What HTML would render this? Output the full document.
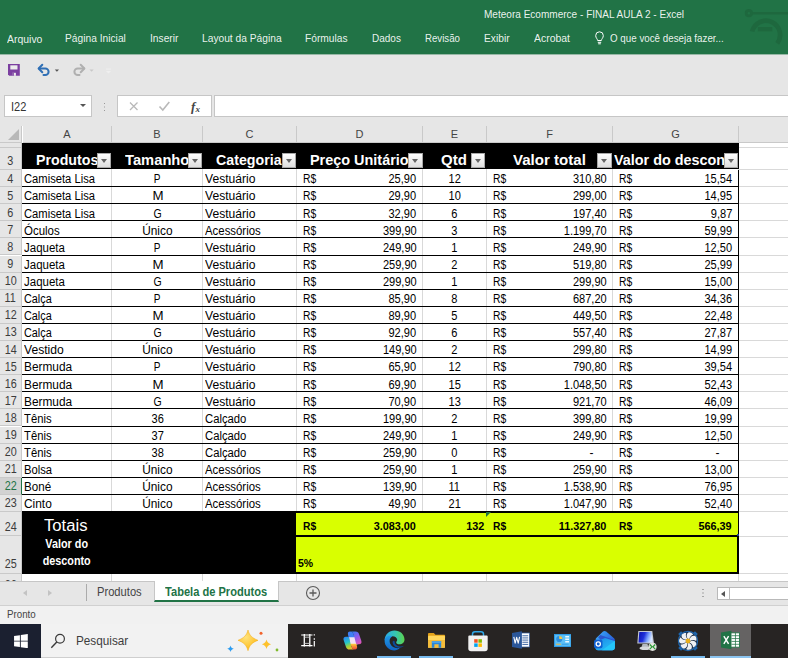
<!DOCTYPE html>
<html><head><meta charset="utf-8"><title>Excel</title>
<style>
*{box-sizing:border-box;margin:0;padding:0}
html,body{width:788px;height:658px;overflow:hidden;background:#e6e6e6}
body{position:relative;font-family:"Liberation Sans",sans-serif;font-size:12px;color:#000}
.abs{position:absolute}
.t{position:absolute;white-space:nowrap;line-height:1}
.t>span{display:inline-block;transform-origin:left center}
.t.r>span{transform-origin:right center}
.t.c>span{transform-origin:center center}
.t.r{text-align:right}
.t.c{text-align:center}
#title{left:0;top:0;width:788px;height:54px;background:#217346}
.mt{color:rgba(255,255,255,.92);font-size:11px;top:33px}
.mt>span{transform:scaleX(.93)}
#sheet{left:0;top:126px;width:788px;height:455px;background:#fff;overflow:hidden}
.ch{position:absolute;top:0;height:17px;background:#e6e6e6;border-right:1px solid #c9c9c9;border-bottom:1px solid #c9c9c9;color:#444;font-size:11px;text-align:center;line-height:17px}
.rhd{position:absolute;left:0;width:22px;background:#e6e6e6;border-bottom:1px solid #c9c9c9;border-right:1px solid #c9c9c9;color:#3c3c3c;font-size:12px;text-align:center}
.rhd>span{display:inline-block;transform:scaleX(.9)}
.vg{position:absolute;width:1px;background:#d9d9d9}
.hg{position:absolute;height:1px;background:#d9d9d9}
.hl{position:absolute;height:1px;background:#000}
.cell{font-size:12px;color:#000}
.cell>span{transform:scaleX(.945)}
.hd{color:#fff;font-weight:bold;font-size:15px}
.hd>span{transform:scaleX(.93)}
.fb{position:absolute;width:14.5px;height:14.5px;background:linear-gradient(#ffffff,#dedede);border:1px solid #a8a8a8}
.fb:after{content:"";position:absolute;left:3px;top:5px;border-left:3.5px solid transparent;border-right:3.5px solid transparent;border-top:4px solid #666}
.tot{font-weight:bold;font-size:11px}
.tot>span{transform:scaleX(.985)}
#tabs{left:0;top:581px;width:788px;height:24px;background:#e6e6e6;border-top:1px solid #c6c6c6}
#status{left:0;top:605px;width:788px;height:19px;background:#f1f1f1;border-top:1px solid #d0d0d0}
#task{left:0;top:624px;width:788px;height:34px;background:#272423}
</style></head><body>

<div id="title" class="abs"></div>
<div class="abs" style="left:0;top:54px;width:788px;height:1px;background:#97b8a6"></div>
<svg class="abs" style="left:736px;top:0" width="52" height="54" viewBox="0 0 52 54">
<g fill="none" stroke="#1e683e">
<circle cx="12.850" cy="13.200" r="2.700" stroke-width="2.800"/><path d="M16.700 13.200H52" stroke-width="2.500"/>
<path d="M16.120 31.460A14.200 14.200 0 1 1 41.240 43.450" stroke-width="4.700"/>
</g><rect x="21.800" y="27.100" width="14.500" height="4.200" fill="#1e683e"/></svg>
<div class="t mt" style="left:484px;top:9px"><span style="transform:scaleX(.913)">Meteora Ecommerce - FINAL AULA 2 - Excel</span></div>
<div class="t mt" style="left:7px;top:33.600px"><span style="transform:scaleX(0.95)">Arquivo</span></div>
<div class="t mt" style="left:65px"><span style="transform:scaleX(0.93)">Página Inicial</span></div>
<div class="t mt" style="left:150px"><span style="transform:scaleX(0.93)">Inserir</span></div>
<div class="t mt" style="left:202px"><span style="transform:scaleX(0.93)">Layout da Página</span></div>
<div class="t mt" style="left:305px"><span style="transform:scaleX(0.93)">Fórmulas</span></div>
<div class="t mt" style="left:372px"><span style="transform:scaleX(0.91)">Dados</span></div>
<div class="t mt" style="left:425px"><span style="transform:scaleX(0.88)">Revisão</span></div>
<div class="t mt" style="left:484px"><span style="transform:scaleX(0.93)">Exibir</span></div>
<div class="t mt" style="left:534px"><span style="transform:scaleX(0.95)">Acrobat</span></div>
<div class="t mt" style="left:610px"><span style="transform:scaleX(0.89)">O que você deseja fazer...</span></div>
<svg class="abs" style="left:594px;top:31px" width="11" height="14" viewBox="0 0 11 14"><g fill="none" stroke="#fff" stroke-width="1"><path d="M3.6 9.5C3.6 8 1.7 7 1.7 4.6a3.8 3.8 0 0 1 7.6 0C9.3 7 7.4 8 7.4 9.5z"/><path d="M3.8 11.3h3.4M4.2 12.8h2.6"/></g></svg>
<svg class="abs" style="left:6px;top:62px" width="110" height="16" viewBox="0 0 110 16">
<path d="M2 2h11.800v11.800H3.200L2 12.600z" fill="#7b3fa0"/><rect x="4.300" y="3.300" width="7.200" height="4.200" fill="#ececec"/><rect x="6.300" y="10.800" width="3.600" height="3" fill="#ececec"/><rect x="6.300" y="10.800" width="1.500" height="3" fill="#7b3fa0"/>
<g fill="none" stroke="#2f6fb5" stroke-width="2" stroke-linecap="round" stroke-linejoin="round"><path d="M33 6.500h6.300a3.300 3.300 0 0 1 0 6.600h-1.800"/><path d="M36.300 2.800l-3.700 3.700 3.700 3.700"/></g>
<path d="M48.800 7.500h4.200l-2.100 2.300z" fill="#555"/>
<g fill="none" stroke="#b0b0b0" stroke-width="2" stroke-linecap="round" stroke-linejoin="round"><path d="M78 6.500h-6.300a3.300 3.300 0 0 0 0 6.600h1.800"/><path d="M74.700 2.800l3.700 3.700-3.700 3.700"/></g>
<path d="M83.500 7.500h4.200l-2.100 2.300z" fill="#c8c8c8"/>
<path d="M100 9h5l-2.500 2.500z" fill="#efefef"/><path d="M100 7h5" stroke="#efefef"/>
</svg>
<div class="abs" style="left:4px;top:95px;width:88px;height:22px;background:#fff;border:1px solid #c6c6c6"></div>
<div class="t" style="left:10.500px;top:100.500px;font-size:12px;color:#333"><span style="transform:scaleX(.92)">I22</span></div>
<div class="abs" style="left:79.500px;top:104px;border-left:3px solid transparent;border-right:3px solid transparent;border-top:3.500px solid #555"></div>
<div class="abs" style="left:104px;top:102.500px;width:1px;height:1px;background:#999;box-shadow:0 3.500px 0 #999,0 7px 0 #999"></div>
<div class="abs" style="left:117px;top:95px;width:95px;height:22px;background:#fff;border:1px solid #c6c6c6"></div>
<svg class="abs" style="left:117px;top:95px" width="95" height="22" viewBox="0 0 95 22">
<path d="M13 7.500l7.500 7.500M20.500 7.500l-7.500 7.500" stroke="#b9b9b9" stroke-width="1.300" fill="none"/>
<path d="M42.500 11.500l3.300 3.500 6.500-8" stroke="#b9b9b9" stroke-width="1.600" fill="none"/>
<text x="74" y="16" font-family="Liberation Serif" font-style="italic" font-weight="bold" font-size="13" fill="#444">f</text>
<text x="78.500" y="16.500" font-family="Liberation Serif" font-style="italic" font-weight="bold" font-size="9" fill="#444">x</text>
</svg>
<div class="abs" style="left:214px;top:95px;width:580px;height:22px;background:#fff;border:1px solid #c6c6c6"></div>
<div id="sheet" class="abs">
<div class="vg" style="left:111px;top:0;height:456px"></div>
<div class="vg" style="left:202px;top:0;height:456px"></div>
<div class="vg" style="left:296px;top:0;height:456px"></div>
<div class="vg" style="left:422px;top:0;height:456px"></div>
<div class="vg" style="left:486px;top:0;height:456px"></div>
<div class="vg" style="left:612px;top:0;height:456px"></div>
<div class="vg" style="left:738px;top:0;height:456px"></div>
<div class="hg" style="left:738px;width:50px;top:43.00px"></div>
<div class="hg" style="left:738px;width:50px;top:60.10px"></div>
<div class="hg" style="left:738px;width:50px;top:77.20px"></div>
<div class="hg" style="left:738px;width:50px;top:94.30px"></div>
<div class="hg" style="left:738px;width:50px;top:111.40px"></div>
<div class="hg" style="left:738px;width:50px;top:128.50px"></div>
<div class="hg" style="left:738px;width:50px;top:145.60px"></div>
<div class="hg" style="left:738px;width:50px;top:162.70px"></div>
<div class="hg" style="left:738px;width:50px;top:179.80px"></div>
<div class="hg" style="left:738px;width:50px;top:196.90px"></div>
<div class="hg" style="left:738px;width:50px;top:214.00px"></div>
<div class="hg" style="left:738px;width:50px;top:231.10px"></div>
<div class="hg" style="left:738px;width:50px;top:248.20px"></div>
<div class="hg" style="left:738px;width:50px;top:265.30px"></div>
<div class="hg" style="left:738px;width:50px;top:282.40px"></div>
<div class="hg" style="left:738px;width:50px;top:299.50px"></div>
<div class="hg" style="left:738px;width:50px;top:316.60px"></div>
<div class="hg" style="left:738px;width:50px;top:333.70px"></div>
<div class="hg" style="left:738px;width:50px;top:350.80px"></div>
<div class="hg" style="left:738px;width:50px;top:367.90px"></div>
<div class="hg" style="left:738px;width:50px;top:385.00px"></div>
<div class="hg" style="left:738px;width:50px;top:410.00px"></div>
<div class="hg" style="left:738px;width:50px;top:447.00px"></div>
<div class="hg" style="left:738px;width:50px;top:21px"></div>
<div class="ch" style="left:0;width:22px"></div>
<div class="abs" style="left:8px;top:3px;border-left:11px solid transparent;border-bottom:11px solid #b8b8b8"></div>
<div class="ch" style="left:23px;width:89px">A</div>
<div class="ch" style="left:112px;width:91px">B</div>
<div class="ch" style="left:203px;width:94px">C</div>
<div class="ch" style="left:297px;width:126px">D</div>
<div class="ch" style="left:423px;width:64px">E</div>
<div class="ch" style="left:487px;width:126px">F</div>
<div class="ch" style="left:613px;width:126px">G</div>
<div class="ch" style="left:739px;width:50px;border-right:0"></div>
<div class="abs" style="left:22px;top:17px;width:717px;height:26.00px;background:#000"></div>
<div class="rhd" style="top:17px;height:5px"></div>
<div class="rhd" style="top:22px;height:22.00px"><div class="t c" style="left:0;width:21px;top:7.00px"><span style="transform:scaleX(.9)">3</span></div></div>
<div class="rhd" style="top:44.00px;height:17.10px;"><div class="t c" style="left:0;width:21px;top:2.5px"><span style="transform:scaleX(.9)">4</span></div></div>
<div class="rhd" style="top:61.10px;height:17.10px;"><div class="t c" style="left:0;width:21px;top:2.5px"><span style="transform:scaleX(.9)">5</span></div></div>
<div class="rhd" style="top:78.20px;height:17.10px;"><div class="t c" style="left:0;width:21px;top:2.5px"><span style="transform:scaleX(.9)">6</span></div></div>
<div class="rhd" style="top:95.30px;height:17.10px;"><div class="t c" style="left:0;width:21px;top:2.5px"><span style="transform:scaleX(.9)">7</span></div></div>
<div class="rhd" style="top:112.40px;height:17.10px;"><div class="t c" style="left:0;width:21px;top:2.5px"><span style="transform:scaleX(.9)">8</span></div></div>
<div class="rhd" style="top:129.50px;height:17.10px;"><div class="t c" style="left:0;width:21px;top:2.5px"><span style="transform:scaleX(.9)">9</span></div></div>
<div class="rhd" style="top:146.60px;height:17.10px;"><div class="t c" style="left:0;width:21px;top:2.5px"><span style="transform:scaleX(.9)">10</span></div></div>
<div class="rhd" style="top:163.70px;height:17.10px;"><div class="t c" style="left:0;width:21px;top:2.5px"><span style="transform:scaleX(.9)">11</span></div></div>
<div class="rhd" style="top:180.80px;height:17.10px;"><div class="t c" style="left:0;width:21px;top:2.5px"><span style="transform:scaleX(.9)">12</span></div></div>
<div class="rhd" style="top:197.90px;height:17.10px;"><div class="t c" style="left:0;width:21px;top:2.5px"><span style="transform:scaleX(.9)">13</span></div></div>
<div class="rhd" style="top:215.00px;height:17.10px;"><div class="t c" style="left:0;width:21px;top:2.5px"><span style="transform:scaleX(.9)">14</span></div></div>
<div class="rhd" style="top:232.10px;height:17.10px;"><div class="t c" style="left:0;width:21px;top:2.5px"><span style="transform:scaleX(.9)">15</span></div></div>
<div class="rhd" style="top:249.20px;height:17.10px;"><div class="t c" style="left:0;width:21px;top:2.5px"><span style="transform:scaleX(.9)">16</span></div></div>
<div class="rhd" style="top:266.30px;height:17.10px;"><div class="t c" style="left:0;width:21px;top:2.5px"><span style="transform:scaleX(.9)">17</span></div></div>
<div class="rhd" style="top:283.40px;height:17.10px;"><div class="t c" style="left:0;width:21px;top:2.5px"><span style="transform:scaleX(.9)">18</span></div></div>
<div class="rhd" style="top:300.50px;height:17.10px;"><div class="t c" style="left:0;width:21px;top:2.5px"><span style="transform:scaleX(.9)">19</span></div></div>
<div class="rhd" style="top:317.60px;height:17.10px;"><div class="t c" style="left:0;width:21px;top:2.5px"><span style="transform:scaleX(.9)">20</span></div></div>
<div class="rhd" style="top:334.70px;height:17.10px;"><div class="t c" style="left:0;width:21px;top:2.5px"><span style="transform:scaleX(.9)">21</span></div></div>
<div class="rhd" style="top:351.80px;height:17.10px;background:#d2d2d2;color:#217346;border-right:1px solid #217346;"><div class="t c" style="left:0;width:21px;top:2.5px"><span style="transform:scaleX(.9)">22</span></div></div>
<div class="rhd" style="top:368.90px;height:17.10px;"><div class="t c" style="left:0;width:21px;top:2.5px"><span style="transform:scaleX(.9)">23</span></div></div>
<div class="rhd" style="top:385.50px;height:24.90px"><div class="t c" style="left:0;width:21px;top:9px"><span style="transform:scaleX(.9)">24</span></div></div>
<div class="rhd" style="top:410.40px;height:37.60px"><div class="t c" style="left:0;width:21px;top:22px"><span style="transform:scaleX(.9)">25</span></div></div>
<div class="rhd" style="top:448.00px;height:20px"><div class="t c" style="left:0;width:21px;top:4.5px"><span style="transform:scaleX(.9)">26</span></div></div>
<div class="t hd" style="left:35.5px;top:25.80px;width:702.5px;height:18px;overflow:hidden"><span style="transform:scaleX(0.9465)">Produtos</span></div>
<div class="fb" style="left:96.5px;top:27.00px"></div>
<div class="t hd" style="left:125px;top:25.80px;width:613px;height:18px;overflow:hidden"><span style="transform:scaleX(0.9818)">Tamanho</span></div>
<div class="fb" style="left:187.5px;top:27.00px"></div>
<div class="t hd" style="left:216px;top:25.80px;width:522px;height:18px;overflow:hidden"><span style="transform:scaleX(0.9475)">Categoria</span></div>
<div class="fb" style="left:281.5px;top:27.00px"></div>
<div class="t hd" style="left:309.5px;top:25.80px;width:428.5px;height:18px;overflow:hidden"><span style="transform:scaleX(0.9619)">Preço Unitário</span></div>
<div class="fb" style="left:408px;top:27.00px"></div>
<div class="t hd" style="left:441px;top:25.80px;width:297px;height:18px;overflow:hidden"><span style="transform:scaleX(1.0013)">Qtd</span></div>
<div class="fb" style="left:470.5px;top:27.00px"></div>
<div class="t hd" style="left:513px;top:25.80px;width:225px;height:18px;overflow:hidden"><span style="transform:scaleX(1.0043)">Valor total</span></div>
<div class="fb" style="left:597px;top:27.00px"></div>
<div class="t hd" style="left:614px;top:25.80px;width:124px;height:18px;overflow:hidden"><span style="transform:scaleX(0.9587)">Valor do desconto</span></div>
<div class="fb" style="left:723.5px;top:27.00px"></div>
<div class="t cell " style="left:24px;top:47.30px"><span style="transform:scaleX(0.934)">Camiseta Lisa</span></div>
<div class="t cell c" style="left:112px;width:91px;top:47.30px"><span style="transform:scaleX(0.8358)">P</span></div>
<div class="t cell " style="left:205px;top:47.30px"><span style="transform:scaleX(1.0086)">Vestuário</span></div>
<div class="t cell " style="left:303px;top:47.30px"><span style="transform:scaleX(0.86)">R$</span></div>
<div class="t cell r" style="left:316px;width:100.500px;top:47.30px"><span style="transform:scaleX(0.92)">25,90</span></div>
<div class="t cell c" style="left:422.5px;width:64px;top:47.30px"><span style="transform:scaleX(0.92)">12</span></div>
<div class="t cell " style="left:493px;top:47.30px"><span style="transform:scaleX(0.86)">R$</span></div>
<div class="t cell r" style="left:506px;width:100.500px;top:47.30px"><span style="transform:scaleX(0.92)">310,80</span></div>
<div class="t cell " style="left:619px;top:47.30px"><span style="transform:scaleX(0.86)">R$</span></div>
<div class="t cell r" style="left:632px;width:100.500px;top:47.30px"><span style="transform:scaleX(0.92)">15,54</span></div>
<div class="t cell " style="left:24px;top:64.40px"><span style="transform:scaleX(0.934)">Camiseta Lisa</span></div>
<div class="t cell c" style="left:112px;width:91px;top:64.40px"><span style="transform:scaleX(1.1068)">M</span></div>
<div class="t cell " style="left:205px;top:64.40px"><span style="transform:scaleX(1.0086)">Vestuário</span></div>
<div class="t cell " style="left:303px;top:64.40px"><span style="transform:scaleX(0.86)">R$</span></div>
<div class="t cell r" style="left:316px;width:100.500px;top:64.40px"><span style="transform:scaleX(0.92)">29,90</span></div>
<div class="t cell c" style="left:422.5px;width:64px;top:64.40px"><span style="transform:scaleX(0.92)">10</span></div>
<div class="t cell " style="left:493px;top:64.40px"><span style="transform:scaleX(0.86)">R$</span></div>
<div class="t cell r" style="left:506px;width:100.500px;top:64.40px"><span style="transform:scaleX(0.92)">299,00</span></div>
<div class="t cell " style="left:619px;top:64.40px"><span style="transform:scaleX(0.86)">R$</span></div>
<div class="t cell r" style="left:632px;width:100.500px;top:64.40px"><span style="transform:scaleX(0.92)">14,95</span></div>
<div class="t cell " style="left:24px;top:81.50px"><span style="transform:scaleX(0.934)">Camiseta Lisa</span></div>
<div class="t cell c" style="left:112px;width:91px;top:81.50px"><span style="transform:scaleX(0.8748)">G</span></div>
<div class="t cell " style="left:205px;top:81.50px"><span style="transform:scaleX(1.0086)">Vestuário</span></div>
<div class="t cell " style="left:303px;top:81.50px"><span style="transform:scaleX(0.86)">R$</span></div>
<div class="t cell r" style="left:316px;width:100.500px;top:81.50px"><span style="transform:scaleX(0.92)">32,90</span></div>
<div class="t cell c" style="left:422.5px;width:64px;top:81.50px"><span style="transform:scaleX(0.92)">6</span></div>
<div class="t cell " style="left:493px;top:81.50px"><span style="transform:scaleX(0.86)">R$</span></div>
<div class="t cell r" style="left:506px;width:100.500px;top:81.50px"><span style="transform:scaleX(0.92)">197,40</span></div>
<div class="t cell " style="left:619px;top:81.50px"><span style="transform:scaleX(0.86)">R$</span></div>
<div class="t cell r" style="left:632px;width:100.500px;top:81.50px"><span style="transform:scaleX(0.92)">9,87</span></div>
<div class="t cell " style="left:24px;top:98.60px"><span style="transform:scaleX(0.9552)">Óculos</span></div>
<div class="t cell c" style="left:112px;width:91px;top:98.60px"><span style="transform:scaleX(0.9895)">Único</span></div>
<div class="t cell " style="left:205px;top:98.60px"><span style="transform:scaleX(0.9492)">Acessórios</span></div>
<div class="t cell " style="left:303px;top:98.60px"><span style="transform:scaleX(0.86)">R$</span></div>
<div class="t cell r" style="left:316px;width:100.500px;top:98.60px"><span style="transform:scaleX(0.92)">399,90</span></div>
<div class="t cell c" style="left:422.5px;width:64px;top:98.60px"><span style="transform:scaleX(0.92)">3</span></div>
<div class="t cell " style="left:493px;top:98.60px"><span style="transform:scaleX(0.86)">R$</span></div>
<div class="t cell r" style="left:506px;width:100.500px;top:98.60px"><span style="transform:scaleX(0.92)">1.199,70</span></div>
<div class="t cell " style="left:619px;top:98.60px"><span style="transform:scaleX(0.86)">R$</span></div>
<div class="t cell r" style="left:632px;width:100.500px;top:98.60px"><span style="transform:scaleX(0.92)">59,99</span></div>
<div class="t cell " style="left:24px;top:115.70px"><span style="transform:scaleX(0.9575)">Jaqueta</span></div>
<div class="t cell c" style="left:112px;width:91px;top:115.70px"><span style="transform:scaleX(0.8358)">P</span></div>
<div class="t cell " style="left:205px;top:115.70px"><span style="transform:scaleX(1.0086)">Vestuário</span></div>
<div class="t cell " style="left:303px;top:115.70px"><span style="transform:scaleX(0.86)">R$</span></div>
<div class="t cell r" style="left:316px;width:100.500px;top:115.70px"><span style="transform:scaleX(0.92)">249,90</span></div>
<div class="t cell c" style="left:422.5px;width:64px;top:115.70px"><span style="transform:scaleX(0.92)">1</span></div>
<div class="t cell " style="left:493px;top:115.70px"><span style="transform:scaleX(0.86)">R$</span></div>
<div class="t cell r" style="left:506px;width:100.500px;top:115.70px"><span style="transform:scaleX(0.92)">249,90</span></div>
<div class="t cell " style="left:619px;top:115.70px"><span style="transform:scaleX(0.86)">R$</span></div>
<div class="t cell r" style="left:632px;width:100.500px;top:115.70px"><span style="transform:scaleX(0.92)">12,50</span></div>
<div class="t cell " style="left:24px;top:132.80px"><span style="transform:scaleX(0.9575)">Jaqueta</span></div>
<div class="t cell c" style="left:112px;width:91px;top:132.80px"><span style="transform:scaleX(1.1068)">M</span></div>
<div class="t cell " style="left:205px;top:132.80px"><span style="transform:scaleX(1.0086)">Vestuário</span></div>
<div class="t cell " style="left:303px;top:132.80px"><span style="transform:scaleX(0.86)">R$</span></div>
<div class="t cell r" style="left:316px;width:100.500px;top:132.80px"><span style="transform:scaleX(0.92)">259,90</span></div>
<div class="t cell c" style="left:422.5px;width:64px;top:132.80px"><span style="transform:scaleX(0.92)">2</span></div>
<div class="t cell " style="left:493px;top:132.80px"><span style="transform:scaleX(0.86)">R$</span></div>
<div class="t cell r" style="left:506px;width:100.500px;top:132.80px"><span style="transform:scaleX(0.92)">519,80</span></div>
<div class="t cell " style="left:619px;top:132.80px"><span style="transform:scaleX(0.86)">R$</span></div>
<div class="t cell r" style="left:632px;width:100.500px;top:132.80px"><span style="transform:scaleX(0.92)">25,99</span></div>
<div class="t cell " style="left:24px;top:149.90px"><span style="transform:scaleX(0.9575)">Jaqueta</span></div>
<div class="t cell c" style="left:112px;width:91px;top:149.90px"><span style="transform:scaleX(0.8748)">G</span></div>
<div class="t cell " style="left:205px;top:149.90px"><span style="transform:scaleX(1.0086)">Vestuário</span></div>
<div class="t cell " style="left:303px;top:149.90px"><span style="transform:scaleX(0.86)">R$</span></div>
<div class="t cell r" style="left:316px;width:100.500px;top:149.90px"><span style="transform:scaleX(0.92)">299,90</span></div>
<div class="t cell c" style="left:422.5px;width:64px;top:149.90px"><span style="transform:scaleX(0.92)">1</span></div>
<div class="t cell " style="left:493px;top:149.90px"><span style="transform:scaleX(0.86)">R$</span></div>
<div class="t cell r" style="left:506px;width:100.500px;top:149.90px"><span style="transform:scaleX(0.92)">299,90</span></div>
<div class="t cell " style="left:619px;top:149.90px"><span style="transform:scaleX(0.86)">R$</span></div>
<div class="t cell r" style="left:632px;width:100.500px;top:149.90px"><span style="transform:scaleX(0.92)">15,00</span></div>
<div class="t cell " style="left:24px;top:167.00px"><span style="transform:scaleX(0.9039)">Calça</span></div>
<div class="t cell c" style="left:112px;width:91px;top:167.00px"><span style="transform:scaleX(0.8358)">P</span></div>
<div class="t cell " style="left:205px;top:167.00px"><span style="transform:scaleX(1.0086)">Vestuário</span></div>
<div class="t cell " style="left:303px;top:167.00px"><span style="transform:scaleX(0.86)">R$</span></div>
<div class="t cell r" style="left:316px;width:100.500px;top:167.00px"><span style="transform:scaleX(0.92)">85,90</span></div>
<div class="t cell c" style="left:422.5px;width:64px;top:167.00px"><span style="transform:scaleX(0.92)">8</span></div>
<div class="t cell " style="left:493px;top:167.00px"><span style="transform:scaleX(0.86)">R$</span></div>
<div class="t cell r" style="left:506px;width:100.500px;top:167.00px"><span style="transform:scaleX(0.92)">687,20</span></div>
<div class="t cell " style="left:619px;top:167.00px"><span style="transform:scaleX(0.86)">R$</span></div>
<div class="t cell r" style="left:632px;width:100.500px;top:167.00px"><span style="transform:scaleX(0.92)">34,36</span></div>
<div class="t cell " style="left:24px;top:184.10px"><span style="transform:scaleX(0.9039)">Calça</span></div>
<div class="t cell c" style="left:112px;width:91px;top:184.10px"><span style="transform:scaleX(1.1068)">M</span></div>
<div class="t cell " style="left:205px;top:184.10px"><span style="transform:scaleX(1.0086)">Vestuário</span></div>
<div class="t cell " style="left:303px;top:184.10px"><span style="transform:scaleX(0.86)">R$</span></div>
<div class="t cell r" style="left:316px;width:100.500px;top:184.10px"><span style="transform:scaleX(0.92)">89,90</span></div>
<div class="t cell c" style="left:422.5px;width:64px;top:184.10px"><span style="transform:scaleX(0.92)">5</span></div>
<div class="t cell " style="left:493px;top:184.10px"><span style="transform:scaleX(0.86)">R$</span></div>
<div class="t cell r" style="left:506px;width:100.500px;top:184.10px"><span style="transform:scaleX(0.92)">449,50</span></div>
<div class="t cell " style="left:619px;top:184.10px"><span style="transform:scaleX(0.86)">R$</span></div>
<div class="t cell r" style="left:632px;width:100.500px;top:184.10px"><span style="transform:scaleX(0.92)">22,48</span></div>
<div class="t cell " style="left:24px;top:201.20px"><span style="transform:scaleX(0.9039)">Calça</span></div>
<div class="t cell c" style="left:112px;width:91px;top:201.20px"><span style="transform:scaleX(0.8748)">G</span></div>
<div class="t cell " style="left:205px;top:201.20px"><span style="transform:scaleX(1.0086)">Vestuário</span></div>
<div class="t cell " style="left:303px;top:201.20px"><span style="transform:scaleX(0.86)">R$</span></div>
<div class="t cell r" style="left:316px;width:100.500px;top:201.20px"><span style="transform:scaleX(0.92)">92,90</span></div>
<div class="t cell c" style="left:422.5px;width:64px;top:201.20px"><span style="transform:scaleX(0.92)">6</span></div>
<div class="t cell " style="left:493px;top:201.20px"><span style="transform:scaleX(0.86)">R$</span></div>
<div class="t cell r" style="left:506px;width:100.500px;top:201.20px"><span style="transform:scaleX(0.92)">557,40</span></div>
<div class="t cell " style="left:619px;top:201.20px"><span style="transform:scaleX(0.86)">R$</span></div>
<div class="t cell r" style="left:632px;width:100.500px;top:201.20px"><span style="transform:scaleX(0.92)">27,87</span></div>
<div class="t cell " style="left:24px;top:218.30px"><span style="transform:scaleX(1.0099)">Vestido</span></div>
<div class="t cell c" style="left:112px;width:91px;top:218.30px"><span style="transform:scaleX(0.9895)">Único</span></div>
<div class="t cell " style="left:205px;top:218.30px"><span style="transform:scaleX(1.0086)">Vestuário</span></div>
<div class="t cell " style="left:303px;top:218.30px"><span style="transform:scaleX(0.86)">R$</span></div>
<div class="t cell r" style="left:316px;width:100.500px;top:218.30px"><span style="transform:scaleX(0.92)">149,90</span></div>
<div class="t cell c" style="left:422.5px;width:64px;top:218.30px"><span style="transform:scaleX(0.92)">2</span></div>
<div class="t cell " style="left:493px;top:218.30px"><span style="transform:scaleX(0.86)">R$</span></div>
<div class="t cell r" style="left:506px;width:100.500px;top:218.30px"><span style="transform:scaleX(0.92)">299,80</span></div>
<div class="t cell " style="left:619px;top:218.30px"><span style="transform:scaleX(0.86)">R$</span></div>
<div class="t cell r" style="left:632px;width:100.500px;top:218.30px"><span style="transform:scaleX(0.92)">14,99</span></div>
<div class="t cell " style="left:24px;top:235.40px"><span style="transform:scaleX(0.9883)">Bermuda</span></div>
<div class="t cell c" style="left:112px;width:91px;top:235.40px"><span style="transform:scaleX(0.8358)">P</span></div>
<div class="t cell " style="left:205px;top:235.40px"><span style="transform:scaleX(1.0086)">Vestuário</span></div>
<div class="t cell " style="left:303px;top:235.40px"><span style="transform:scaleX(0.86)">R$</span></div>
<div class="t cell r" style="left:316px;width:100.500px;top:235.40px"><span style="transform:scaleX(0.92)">65,90</span></div>
<div class="t cell c" style="left:422.5px;width:64px;top:235.40px"><span style="transform:scaleX(0.92)">12</span></div>
<div class="t cell " style="left:493px;top:235.40px"><span style="transform:scaleX(0.86)">R$</span></div>
<div class="t cell r" style="left:506px;width:100.500px;top:235.40px"><span style="transform:scaleX(0.92)">790,80</span></div>
<div class="t cell " style="left:619px;top:235.40px"><span style="transform:scaleX(0.86)">R$</span></div>
<div class="t cell r" style="left:632px;width:100.500px;top:235.40px"><span style="transform:scaleX(0.92)">39,54</span></div>
<div class="t cell " style="left:24px;top:252.50px"><span style="transform:scaleX(0.9883)">Bermuda</span></div>
<div class="t cell c" style="left:112px;width:91px;top:252.50px"><span style="transform:scaleX(1.1068)">M</span></div>
<div class="t cell " style="left:205px;top:252.50px"><span style="transform:scaleX(1.0086)">Vestuário</span></div>
<div class="t cell " style="left:303px;top:252.50px"><span style="transform:scaleX(0.86)">R$</span></div>
<div class="t cell r" style="left:316px;width:100.500px;top:252.50px"><span style="transform:scaleX(0.92)">69,90</span></div>
<div class="t cell c" style="left:422.5px;width:64px;top:252.50px"><span style="transform:scaleX(0.92)">15</span></div>
<div class="t cell " style="left:493px;top:252.50px"><span style="transform:scaleX(0.86)">R$</span></div>
<div class="t cell r" style="left:506px;width:100.500px;top:252.50px"><span style="transform:scaleX(0.92)">1.048,50</span></div>
<div class="t cell " style="left:619px;top:252.50px"><span style="transform:scaleX(0.86)">R$</span></div>
<div class="t cell r" style="left:632px;width:100.500px;top:252.50px"><span style="transform:scaleX(0.92)">52,43</span></div>
<div class="t cell " style="left:24px;top:269.60px"><span style="transform:scaleX(0.9883)">Bermuda</span></div>
<div class="t cell c" style="left:112px;width:91px;top:269.60px"><span style="transform:scaleX(0.8748)">G</span></div>
<div class="t cell " style="left:205px;top:269.60px"><span style="transform:scaleX(1.0086)">Vestuário</span></div>
<div class="t cell " style="left:303px;top:269.60px"><span style="transform:scaleX(0.86)">R$</span></div>
<div class="t cell r" style="left:316px;width:100.500px;top:269.60px"><span style="transform:scaleX(0.92)">70,90</span></div>
<div class="t cell c" style="left:422.5px;width:64px;top:269.60px"><span style="transform:scaleX(0.92)">13</span></div>
<div class="t cell " style="left:493px;top:269.60px"><span style="transform:scaleX(0.86)">R$</span></div>
<div class="t cell r" style="left:506px;width:100.500px;top:269.60px"><span style="transform:scaleX(0.92)">921,70</span></div>
<div class="t cell " style="left:619px;top:269.60px"><span style="transform:scaleX(0.86)">R$</span></div>
<div class="t cell r" style="left:632px;width:100.500px;top:269.60px"><span style="transform:scaleX(0.92)">46,09</span></div>
<div class="t cell " style="left:24px;top:286.70px"><span style="transform:scaleX(0.9393)">Tênis</span></div>
<div class="t cell c" style="left:112px;width:91px;top:286.70px"><span style="transform:scaleX(0.92)">36</span></div>
<div class="t cell " style="left:205px;top:286.70px"><span style="transform:scaleX(0.939)">Calçado</span></div>
<div class="t cell " style="left:303px;top:286.70px"><span style="transform:scaleX(0.86)">R$</span></div>
<div class="t cell r" style="left:316px;width:100.500px;top:286.70px"><span style="transform:scaleX(0.92)">199,90</span></div>
<div class="t cell c" style="left:422.5px;width:64px;top:286.70px"><span style="transform:scaleX(0.92)">2</span></div>
<div class="t cell " style="left:493px;top:286.70px"><span style="transform:scaleX(0.86)">R$</span></div>
<div class="t cell r" style="left:506px;width:100.500px;top:286.70px"><span style="transform:scaleX(0.92)">399,80</span></div>
<div class="t cell " style="left:619px;top:286.70px"><span style="transform:scaleX(0.86)">R$</span></div>
<div class="t cell r" style="left:632px;width:100.500px;top:286.70px"><span style="transform:scaleX(0.92)">19,99</span></div>
<div class="t cell " style="left:24px;top:303.80px"><span style="transform:scaleX(0.9393)">Tênis</span></div>
<div class="t cell c" style="left:112px;width:91px;top:303.80px"><span style="transform:scaleX(0.92)">37</span></div>
<div class="t cell " style="left:205px;top:303.80px"><span style="transform:scaleX(0.939)">Calçado</span></div>
<div class="t cell " style="left:303px;top:303.80px"><span style="transform:scaleX(0.86)">R$</span></div>
<div class="t cell r" style="left:316px;width:100.500px;top:303.80px"><span style="transform:scaleX(0.92)">249,90</span></div>
<div class="t cell c" style="left:422.5px;width:64px;top:303.80px"><span style="transform:scaleX(0.92)">1</span></div>
<div class="t cell " style="left:493px;top:303.80px"><span style="transform:scaleX(0.86)">R$</span></div>
<div class="t cell r" style="left:506px;width:100.500px;top:303.80px"><span style="transform:scaleX(0.92)">249,90</span></div>
<div class="t cell " style="left:619px;top:303.80px"><span style="transform:scaleX(0.86)">R$</span></div>
<div class="t cell r" style="left:632px;width:100.500px;top:303.80px"><span style="transform:scaleX(0.92)">12,50</span></div>
<div class="t cell " style="left:24px;top:320.90px"><span style="transform:scaleX(0.9393)">Tênis</span></div>
<div class="t cell c" style="left:112px;width:91px;top:320.90px"><span style="transform:scaleX(0.92)">38</span></div>
<div class="t cell " style="left:205px;top:320.90px"><span style="transform:scaleX(0.939)">Calçado</span></div>
<div class="t cell " style="left:303px;top:320.90px"><span style="transform:scaleX(0.86)">R$</span></div>
<div class="t cell r" style="left:316px;width:100.500px;top:320.90px"><span style="transform:scaleX(0.92)">259,90</span></div>
<div class="t cell c" style="left:422.5px;width:64px;top:320.90px"><span style="transform:scaleX(0.92)">0</span></div>
<div class="t cell " style="left:493px;top:320.90px"><span style="transform:scaleX(0.86)">R$</span></div>
<div class="t cell " style="left:589.5px;top:320.90px"><span style="transform:scaleX(1)">-</span></div>
<div class="t cell " style="left:619px;top:320.90px"><span style="transform:scaleX(0.86)">R$</span></div>
<div class="t cell " style="left:715.5px;top:320.90px"><span style="transform:scaleX(1)">-</span></div>
<div class="t cell " style="left:24px;top:338.00px"><span style="transform:scaleX(0.9354)">Bolsa</span></div>
<div class="t cell c" style="left:112px;width:91px;top:338.00px"><span style="transform:scaleX(0.9895)">Único</span></div>
<div class="t cell " style="left:205px;top:338.00px"><span style="transform:scaleX(0.9492)">Acessórios</span></div>
<div class="t cell " style="left:303px;top:338.00px"><span style="transform:scaleX(0.86)">R$</span></div>
<div class="t cell r" style="left:316px;width:100.500px;top:338.00px"><span style="transform:scaleX(0.92)">259,90</span></div>
<div class="t cell c" style="left:422.5px;width:64px;top:338.00px"><span style="transform:scaleX(0.92)">1</span></div>
<div class="t cell " style="left:493px;top:338.00px"><span style="transform:scaleX(0.86)">R$</span></div>
<div class="t cell r" style="left:506px;width:100.500px;top:338.00px"><span style="transform:scaleX(0.92)">259,90</span></div>
<div class="t cell " style="left:619px;top:338.00px"><span style="transform:scaleX(0.86)">R$</span></div>
<div class="t cell r" style="left:632px;width:100.500px;top:338.00px"><span style="transform:scaleX(0.92)">13,00</span></div>
<div class="t cell " style="left:24px;top:355.10px"><span style="transform:scaleX(0.9668)">Boné</span></div>
<div class="t cell c" style="left:112px;width:91px;top:355.10px"><span style="transform:scaleX(0.9895)">Único</span></div>
<div class="t cell " style="left:205px;top:355.10px"><span style="transform:scaleX(0.9492)">Acessórios</span></div>
<div class="t cell " style="left:303px;top:355.10px"><span style="transform:scaleX(0.86)">R$</span></div>
<div class="t cell r" style="left:316px;width:100.500px;top:355.10px"><span style="transform:scaleX(0.92)">139,90</span></div>
<div class="t cell c" style="left:422.5px;width:64px;top:355.10px"><span style="transform:scaleX(0.92)">11</span></div>
<div class="t cell " style="left:493px;top:355.10px"><span style="transform:scaleX(0.86)">R$</span></div>
<div class="t cell r" style="left:506px;width:100.500px;top:355.10px"><span style="transform:scaleX(0.92)">1.538,90</span></div>
<div class="t cell " style="left:619px;top:355.10px"><span style="transform:scaleX(0.86)">R$</span></div>
<div class="t cell r" style="left:632px;width:100.500px;top:355.10px"><span style="transform:scaleX(0.92)">76,95</span></div>
<div class="t cell " style="left:24px;top:372.20px"><span style="transform:scaleX(0.9927)">Cinto</span></div>
<div class="t cell c" style="left:112px;width:91px;top:372.20px"><span style="transform:scaleX(0.9895)">Único</span></div>
<div class="t cell " style="left:205px;top:372.20px"><span style="transform:scaleX(0.9492)">Acessórios</span></div>
<div class="t cell " style="left:303px;top:372.20px"><span style="transform:scaleX(0.86)">R$</span></div>
<div class="t cell r" style="left:316px;width:100.500px;top:372.20px"><span style="transform:scaleX(0.92)">49,90</span></div>
<div class="t cell c" style="left:422.5px;width:64px;top:372.20px"><span style="transform:scaleX(0.92)">21</span></div>
<div class="t cell " style="left:493px;top:372.20px"><span style="transform:scaleX(0.86)">R$</span></div>
<div class="t cell r" style="left:506px;width:100.500px;top:372.20px"><span style="transform:scaleX(0.92)">1.047,90</span></div>
<div class="t cell " style="left:619px;top:372.20px"><span style="transform:scaleX(0.86)">R$</span></div>
<div class="t cell r" style="left:632px;width:100.500px;top:372.20px"><span style="transform:scaleX(0.92)">52,40</span></div>
<div class="hl" style="left:22px;width:716px;top:60.10px"></div>
<div class="hl" style="left:22px;width:716px;top:77.20px"></div>
<div class="hl" style="left:22px;width:716px;top:94.30px"></div>
<div class="hl" style="left:22px;width:716px;top:111.40px"></div>
<div class="hl" style="left:22px;width:716px;top:128.50px"></div>
<div class="hl" style="left:22px;width:716px;top:145.60px"></div>
<div class="hl" style="left:22px;width:716px;top:162.70px"></div>
<div class="hl" style="left:22px;width:716px;top:179.80px"></div>
<div class="hl" style="left:22px;width:716px;top:196.90px"></div>
<div class="hl" style="left:22px;width:716px;top:214.00px"></div>
<div class="hl" style="left:22px;width:716px;top:231.10px"></div>
<div class="hl" style="left:22px;width:716px;top:248.20px"></div>
<div class="hl" style="left:22px;width:716px;top:265.30px"></div>
<div class="hl" style="left:22px;width:716px;top:282.40px"></div>
<div class="hl" style="left:22px;width:716px;top:299.50px"></div>
<div class="hl" style="left:22px;width:716px;top:316.60px"></div>
<div class="hl" style="left:22px;width:716px;top:333.70px"></div>
<div class="hl" style="left:22px;width:716px;top:350.80px"></div>
<div class="hl" style="left:22px;width:716px;top:367.90px"></div>
<div class="hl" style="left:22px;width:716px;top:385.00px"></div>
<div class="abs" style="left:738px;top:44.00px;width:1px;height:404.00px;background:#000"></div>
<div class="abs" style="left:22px;top:385.50px;width:274px;height:62.50px;background:#000"></div>
<div class="abs" style="left:296px;top:385.50px;width:442px;height:24.90px;background:#d9ff00;border-top:1px solid #000"></div>
<div class="abs" style="left:294px;top:409.40px;width:445px;height:39.10px;background:#d9ff00;border:2px solid #000"></div>
<div class="abs" style="left:736.5px;top:407.90px;width:2.5px;height:2.5px;background:#1f3f8f"></div>
<div class="t" style="left:44.3px;top:391.50px;color:#fff;font-size:16px"><span style="transform:scaleX(1.04)">Totais</span></div>
<div class="t c" style="left:22px;width:89px;top:409.90px;color:#fff;font-size:12px;font-weight:bold;line-height:17px"><span style="transform:scaleX(.9)">Valor do<br>desconto</span></div>
<div class="t tot" style="left:303px;top:394.50px"><span style="transform:scaleX(.93)">R$</span></div>
<div class="t tot r" style="left:316px;width:100px;top:394.50px"><span>3.083,00</span></div>
<div class="t tot r" style="left:422px;width:62px;top:394.50px"><span>132</span></div>
<div class="t tot" style="left:493px;top:394.50px"><span style="transform:scaleX(.93)">R$</span></div>
<div class="t tot r" style="left:506px;width:100px;top:394.50px"><span>11.327,80</span></div>
<div class="t tot" style="left:619px;top:394.50px"><span style="transform:scaleX(.93)">R$</span></div>
<div class="t tot r" style="left:632px;width:100px;top:394.50px"><span>566,39</span></div>
<div class="t" style="left:298px;top:432.00px;font-size:11px;font-weight:bold"><span style="transform:scaleX(.95)">5%</span></div>
<div class="abs" style="left:486px;top:385.50px;border-right:5px solid transparent;border-top:5px solid #217346"></div>
</div>
<div id="tabs" class="abs"></div>
<div class="abs" style="left:23px;top:590px;border-top:3.5px solid transparent;border-bottom:3.5px solid transparent;border-right:4px solid #c3c3c3"></div>
<div class="abs" style="left:48px;top:590px;border-top:3.5px solid transparent;border-bottom:3.5px solid transparent;border-left:4px solid #c3c3c3"></div>
<div class="abs" style="left:86px;top:584px;width:1px;height:17px;background:#ababab"></div>
<div class="t" style="left:97px;top:586px;font-size:12px;color:#444"><span style="transform:scaleX(.93)">Produtos</span></div>
<div class="abs" style="left:153.5px;top:581px;width:125px;height:21px;background:#fff;border:1px solid #c6c6c6;border-top:0;border-bottom:2px solid #217346"></div>
<div class="t" style="left:164.5px;top:586px;font-size:12px;color:#217346;font-weight:bold"><span style="transform:scaleX(.925)">Tabela de Produtos</span></div>
<svg class="abs" style="left:305px;top:584.500px" width="16" height="16" viewBox="0 0 16 16"><circle cx="8" cy="8" r="6.500" fill="none" stroke="#5a5a5a" stroke-width="1.100"/><path d="M8 4.500v7M4.500 8h7" stroke="#5a5a5a" stroke-width="1.300"/></svg>
<div class="abs" style="left:702px;top:588.500px;width:1.500px;height:1.500px;background:#a6a6a6;box-shadow:0 3.500px 0 #a6a6a6,0 7px 0 #a6a6a6"></div>
<div class="abs" style="left:717px;top:586.500px;width:75px;height:13.500px;background:#fff;border:1px solid #b9b9b9"></div>
<div class="abs" style="left:717px;top:586.500px;width:13px;height:13.500px;background:#fff;border:1px solid #b9b9b9"></div>
<div class="abs" style="left:721px;top:590.500px;border-top:3px solid transparent;border-bottom:3px solid transparent;border-right:4px solid #555"></div>
<div id="status" class="abs"></div>
<div class="t" style="left:6.500px;top:610px;font-size:10px;color:#444"><span style="transform:scaleX(.975)">Pronto</span></div>
<div id="task" class="abs"></div>
<div class="abs" style="left:0;top:624px;width:41px;height:34px;background:#1b2030"></div>
<div class="abs" style="left:41px;top:624px;width:247px;height:34px;background:#f2f2f2;border-bottom:1px solid #cfcfcf"></div>
<svg class="abs" style="left:13.700px;top:633.900px" width="14.300" height="14.200" viewBox="0 0 16 16" fill="#fff"><path d="M0 2.2L6.6 1.3V7.5H0zM7.6 1.1L15.5 0V7.5H7.6zM0 8.5H6.6V14.7L0 13.8zM7.6 8.5H15.5V16L7.6 14.9z"/></svg>
<svg class="abs" style="left:50px;top:633px" width="16" height="16" viewBox="0 0 16 16"><circle cx="10" cy="5.8" r="4.4" fill="none" stroke="#3a3a3a" stroke-width="1.2"/><path d="M6.8 9L1.3 14.7" stroke="#3a3a3a" stroke-width="1.4"/></svg>
<div class="t" style="left:75.500px;top:634.700px;font-size:12.500px;color:#3d3d3d"><span style="transform:scaleX(.94)">Pesquisar</span></div>
<svg class="abs" style="left:226px;top:627.500px" width="60" height="30" viewBox="0 0 60 30">
<defs><radialGradient id="sg" cx=".4" cy=".35" r=".7"><stop offset="0" stop-color="#ffe27a"/><stop offset="1" stop-color="#fdb913"/></radialGradient></defs>
<path d="M22 2c1.300 5.200 4 8 10 10.300c-6 2.300-8.700 5.200-10 10.400c-1.300-5.200-4-8.100-10-10.400c6-2.300 8.700-5.100 10-10.300z" fill="url(#sg)" stroke="#f5a90a" stroke-width=".5" stroke-linejoin="round"/>
<path d="M40.500 11.500c.7 2.600 1.800 3.800 4.600 4.700c-2.800.9-3.900 2.100-4.600 4.700c-.7-2.600-1.800-3.800-4.600-4.700c2.800-.9 3.900-2.100 4.600-4.700z" fill="#fdc12c"/>
<path d="M4.500 17.500c.5 1.900 1.300 2.700 3.300 3.300c-2 .6-2.800 1.400-3.300 3.300c-.5-1.900-1.300-2.700-3.300-3.300c2-.6 2.800-1.400 3.300-3.300z" fill="#2d9cf0"/>
<circle cx="35" cy="5.300" r="1.500" fill="#f2622b"/><circle cx="51" cy="22" r="1.400" fill="#7fba2c"/>
</svg>
<svg class="abs" style="left:299px;top:632px" width="18" height="16" viewBox="0 0 18 16" fill="none" stroke="#fff" stroke-width="1.100"><path d="M2.200 3h11.300M2.200 13.600h11.300"/><path d="M5.300 2v12.600M10.800 2v12.600" stroke-width="1.300"/><path d="M5.300 5.200h5.500M5.300 11.400h5.500" stroke-width=".9" stroke="#cfcfcf"/><path d="M15.300 2.300v1.200M15.300 6.200v1.500M15.300 9v5.600" stroke-width="1.200"/></svg>
<div class="abs" style="left:377px;top:656px;width:34px;height:2px;background:#76b9ed"></div>
<div class="abs" style="left:419px;top:656px;width:34px;height:2px;background:#76b9ed"></div>
<div class="abs" style="left:671px;top:656px;width:34px;height:2px;background:#76b9ed"></div>
<div class="abs" style="left:710px;top:624px;width:41px;height:34px;background:#656363"></div>
<div class="abs" style="left:710px;top:656px;width:41px;height:2px;background:#8cc4f0"></div>
<svg class="abs" style="left:342px;top:630px" width="21" height="21" viewBox="0 0 21 21">
<defs><linearGradient id="cp1" x1=".2" y1="0" x2=".8" y2="1"><stop offset="0" stop-color="#2f7df2"/><stop offset=".45" stop-color="#8a5cf0"/><stop offset="1" stop-color="#e055b8"/></linearGradient>
<linearGradient id="cp2" x1=".3" y1="0" x2=".7" y2="1"><stop offset="0" stop-color="#2b8cf0"/><stop offset=".4" stop-color="#25c7c9"/><stop offset=".7" stop-color="#a4d535"/><stop offset="1" stop-color="#ffb52e"/></linearGradient>
<linearGradient id="cp3" x1="0" y1="0" x2="0" y2="1"><stop offset="0" stop-color="#ffd23a"/><stop offset="1" stop-color="#f0453a"/></linearGradient></defs>
<path d="M7 6.500h7l1.500 8h-8z" fill="#f1e3f4"/><path d="M8 1.500h5.500c2 0 3 .9 3.600 2.800l2.200 6.400c.7 2-.2 3.600-2.300 3.600h-2.800l-2.200-8.500c-.6-2.200-1.600-4.300-4-4.300z" fill="url(#cp1)"/>
<path d="M13 19.500H7.500c-2 0-3-.9-3.600-2.800L1.700 10.300C1 8.300 1.900 6.700 4 6.700h2.800l2.200 8.500c.6 2.200 1.600 4.300 4 4.300z" fill="url(#cp2)"/>
<path d="M9 15.200c.6 2.200 1.600 4.300 4 4.300c1.700 0 2.500-1.200 2-3.200l-.7-2.600H8.600z" fill="url(#cp3)"/>
<path d="M12 5.800c-.6-2.200-1.600-4.300-4-4.300c-1.700 0-2.500 1.200-2 3.200l.7 2.600h5.700z" fill="#3f7ff5"/>
</svg>
<svg class="abs" style="left:384px;top:630px" width="21" height="21" viewBox="0 0 21 21">
<defs><linearGradient id="eg1" x1="0" y1="0" x2="1" y2="0"><stop offset="0" stop-color="#2aa8ea"/><stop offset=".55" stop-color="#36c6b0"/><stop offset="1" stop-color="#5cd44d"/></linearGradient>
<linearGradient id="eg2" x1="0" y1="0" x2="0" y2="1"><stop offset="0" stop-color="#1f9be8"/><stop offset="1" stop-color="#1263c4"/></linearGradient></defs>
<path d="M.6 10C.9 4.500 5.200.5 10.500.5c5.600 0 10 3.900 10 9c0 2.800-2.100 4.800-5 4.800c-2 0-3.300-.8-3.300-1.900c0-.8 1-1.100 1-2.600c0-2-2.100-3.600-4.800-3.600C5 6.200 1.400 8.300.6 10z" fill="url(#eg1)"/>
<path d="M.6 10.500C.8 6.500 5 5 8.400 6.200C5.500 7.800 5 11 6.400 14c1.500 3 5 5 9.600 3.800c-1.600 1.900-3.700 2.700-5.700 2.700C5 20.500.4 16 .6 10.500z" fill="url(#eg2)"/>
<path d="M8.600 11.800c0 3 2.500 6.200 7 6c2-.1 3.500-1 4.300-2c-1.200.6-2.500.9-4.100.7c-3-.4-5.200-2.200-5.200-4.700c0-1-.5-2-2 0z" fill="#0c4a9c"/>
</svg>
<svg class="abs" style="left:427px;top:632px" width="19" height="17" viewBox="0 0 22 20">
<path d="M1 2.500c0-.8.500-1.300 1.300-1.300h5.500l2 2h10c.8 0 1.300.5 1.300 1.300V7H1z" fill="#e3a21a"/>
<rect x="1" y="4.500" width="20" height="14" rx="1" fill="#ffd65c"/>
<path d="M1 9.500h20v7.800c0 .8-.5 1.200-1.300 1.200H2.300c-.8 0-1.300-.4-1.300-1.200z" fill="#f4bc3a"/>
<path d="M5.500 11h11v7.500h-3v-4h-5v4h-3z" fill="#2a86d8"/><path d="M5.500 11h11v1.800h-11z" fill="#4aa6ee"/>
</svg>
<svg class="abs" style="left:467px;top:630px" width="22" height="23" viewBox="0 0 22 23">
<path d="M5.500 6.500V4.300c0-1.500 1-2.500 2.500-2.500h6c1.500 0 2.500 1 2.500 2.500v2.200" fill="none" stroke="#2ea7e8" stroke-width="1.500"/>
<path d="M1.300 6.800c0-.8.500-1.300 1.300-1.300h16.800c.8 0 1.300.5 1.300 1.300v11.700c0 1.700-1 2.700-2.700 2.700H4c-1.700 0-2.700-1-2.700-2.700z" fill="#f1f1f1"/>
<rect x="7.200" y="9.200" width="3.500" height="3.500" fill="#f25022"/><rect x="11.400" y="9.200" width="3.500" height="3.500" fill="#7fba00"/>
<rect x="7.200" y="13.400" width="3.500" height="3.500" fill="#00a4ef"/><rect x="11.400" y="13.400" width="3.500" height="3.500" fill="#ffb900"/>
</svg>
<svg class="abs" style="left:511px;top:631px" width="20" height="18" viewBox="0 0 22 20">
<rect x="9" y="2.200" width="11.500" height="15.600" fill="#fff" stroke="#2b579a" stroke-width=".8"/>
<path d="M12.500 5.300h6.500M12.500 7.700h6.500M12.500 10.100h6.500M12.500 12.500h6.500M12.500 14.900h6.500" stroke="#2b579a" stroke-width="1"/>
<path d="M1 2.200L12 .3v19.400L1 17.800z" fill="#2b579a"/>
<path d="M3 6.500l1.500 7 1.700-6.500 1.700 6.500 1.500-7" fill="none" stroke="#fff" stroke-width="1.200" stroke-linejoin="round"/>
</svg>
<svg class="abs" style="left:553.500px;top:634px" width="17.500" height="13" viewBox="0 0 21 15.600">
<rect x="0" y="0" width="21" height="15.600" fill="#2f9be6"/>
<rect x="1.300" y="1.300" width="18.400" height="13" fill="#5cc0f7"/>
<circle cx="6.300" cy="6" r="3.700" fill="#2d8fe0"/><path d="M6.300 6V2.300A3.700 3.700 0 0 1 10 6z" fill="#f7c948"/>
<path d="M13.500 3.300h4.500M13.500 6.300h4.500M13.500 9.300h4.500" stroke="#e9f7ff" stroke-width="1.700"/>
<path d="M2.500 12.300h6" stroke="#e8b84a" stroke-width="1.300"/><path d="M9.500 12.300h8" stroke="#2f9be6" stroke-width="1.100"/>
</svg>
<svg class="abs" style="left:593.500px;top:630px" width="22" height="21" viewBox="0 0 22 21">
<defs><linearGradient id="ol1" x1="0" y1="0" x2="1" y2=".6"><stop offset="0" stop-color="#45b0f7"/><stop offset=".5" stop-color="#2f86ea"/><stop offset="1" stop-color="#2a55d4"/></linearGradient>
<linearGradient id="ol2" x1="0" y1="0" x2="1" y2="1"><stop offset="0" stop-color="#1c86e6"/><stop offset="1" stop-color="#27c4f8"/></linearGradient></defs>
<path d="M1.500 8.800L9 1.600c1-.9 2.200-.9 3.200 0l7.800 6.700c.5.500.8 1 .8 1.800v7.500c0 1.600-1 2.600-2.600 2.600H4c-1.600 0-2.600-1-2.600-2.600v-7c0-.8.300-1.300.8-1.800z" fill="url(#ol1)"/>
<path d="M6.500 5l14.300 5.300v1.500L11 14.500 4.200 7.200z" fill="#2a48c6" opacity=".8"/>
<path d="M1.500 12l9.500-4 9.800 3v6.600c0 1.600-1 2.600-2.600 2.600H4c-1.600 0-2.600-1-2.600-2.600z" fill="url(#ol2)"/>
<path d="M8 20.200L20.800 11v6.600c0 1.600-1 2.600-2.600 2.600z" fill="#25c6f9"/>
<rect x="0" y="9.800" width="8.500" height="8.500" rx="1.800" fill="#1160d0"/><circle cx="4.250" cy="14" r="2.100" fill="none" stroke="#fff" stroke-width="1.300"/>
</svg>
<svg class="abs" style="left:636px;top:630px" width="22" height="22" viewBox="0 0 22 22">
<defs><linearGradient id="rd1" x1="0" y1="0" x2="1" y2=".25"><stop offset="0" stop-color="#0a10ae"/><stop offset=".45" stop-color="#1f30da"/><stop offset=".75" stop-color="#7fa6ff"/><stop offset="1" stop-color="#d6e4ff"/></linearGradient></defs>
<path d="M2.300 1h14l1.700 12.500H1.300z" fill="#c3c8d0"/>
<path d="M3.300 2h12l1.500 10.500H2.500z" fill="url(#rd1)"/>
<path d="M6.500 14h5l1 3h-7z" fill="#b4b9c0"/><ellipse cx="9" cy="18.300" rx="5.500" ry="1.800" fill="#d5d8dc"/>
<circle cx="16.500" cy="16.800" r="4.100" fill="#e2e4df"/><path d="M13.800 14.500l2.200 2.300-2.200 2.300M19.200 14.500l-2.200 2.300 2.200 2.300" fill="none" stroke="#2c9a36" stroke-width="1.200"/>
</svg>
<svg class="abs" style="left:677px;top:630px" width="22" height="22" viewBox="0 0 23 23">
<path d="M2 5l3-3M21 5l-3-3M2 18l3 3M21 18l-3 3" stroke="#1f66ad" stroke-width="2.200"/>
<circle cx="11.500" cy="11.500" r="10" fill="#1a2c44" stroke="#1f66ad" stroke-width="1.300"/>
<g fill="#eef1f4"><path d="M11.500 9.300C9.300 6.800 9.800 3.300 12.500 2.300c2.100 0 3.600 1.200 4.400 2.600c-2.100.5-3.900 2.500-3.900 4.600z" transform="rotate(0.0 11.500 11.500)"/><path d="M11.500 9.300C9.300 6.800 9.800 3.300 12.500 2.300c2.100 0 3.600 1.200 4.400 2.600c-2.100.5-3.900 2.500-3.900 4.600z" transform="rotate(51.4 11.500 11.500)"/><path d="M11.500 9.300C9.300 6.800 9.800 3.300 12.500 2.300c2.100 0 3.600 1.200 4.400 2.600c-2.100.5-3.900 2.500-3.900 4.600z" transform="rotate(102.9 11.500 11.500)"/><path d="M11.500 9.300C9.300 6.800 9.800 3.300 12.500 2.300c2.100 0 3.600 1.200 4.400 2.600c-2.100.5-3.900 2.500-3.900 4.600z" transform="rotate(154.3 11.500 11.500)"/><path d="M11.500 9.300C9.300 6.800 9.800 3.300 12.500 2.300c2.100 0 3.600 1.200 4.400 2.600c-2.100.5-3.900 2.500-3.900 4.600z" transform="rotate(205.7 11.500 11.500)"/><path d="M11.500 9.300C9.300 6.800 9.800 3.300 12.500 2.300c2.100 0 3.600 1.200 4.400 2.600c-2.100.5-3.900 2.500-3.900 4.600z" transform="rotate(257.1 11.500 11.500)"/><path d="M11.500 9.300C9.300 6.800 9.800 3.300 12.500 2.300c2.100 0 3.600 1.200 4.400 2.600c-2.100.5-3.900 2.500-3.900 4.600z" transform="rotate(308.6 11.500 11.500)"/></g>
<circle cx="11.500" cy="11.500" r="2.500" fill="#e9ae1a"/>
</svg>
<svg class="abs" style="left:720px;top:630px" width="21" height="20" viewBox="0 0 22 20">
<rect x="9" y="2.500" width="11.500" height="15" fill="#fff" stroke="#217346" stroke-width=".9"/>
<path d="M12 5.500h8.500M12 8.500h8.500M12 11.500h8.500M12 14.500h8.500M16.200 2.500v15" stroke="#217346" stroke-width=".8"/>
<path d="M1 2.200L12 .3v19.400L1 17.800z" fill="#217346"/>
<path d="M4 6l5 8M9 6l-5 8" stroke="#fff" stroke-width="1.500"/>
</svg>
</body></html>
